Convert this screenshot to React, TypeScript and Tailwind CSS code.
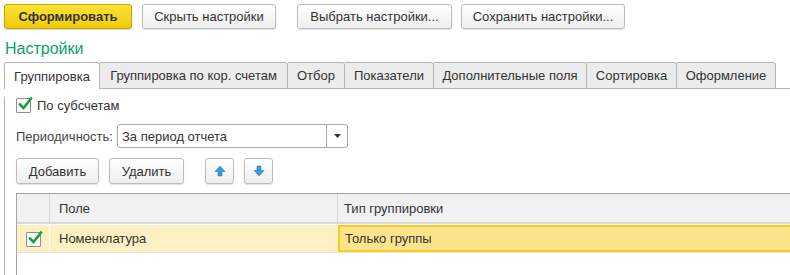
import React from "react";

const Btn = ({ children, className = "" }: { children: React.ReactNode; className?: string }) => (
  <div
    className={
      "h-[25px] flex items-center justify-center rounded-[3px] border border-[#bcbcbc] bg-gradient-to-b from-[#ffffff] to-[#eeeeee] shadow-[0_1px_1px_rgba(0,0,0,0.12)] text-[#333] " +
      className
    }
  >
    {children}
  </div>
);

const Check = ({ className = "" }: { className?: string }) => (
  <div className={"relative w-[15px] h-[15px] border border-[#8f8f8f] bg-white rounded-[1px] " + className}>
    <svg className="absolute left-[1px] top-[-3px]" width="15" height="15" viewBox="0 0 15 15">
      <path d="M2 8.5 L5.5 12 L13 2.5" fill="none" stroke="#16a03c" strokeWidth="2.6" strokeLinecap="square" />
    </svg>
  </div>
);

const Arrow = ({ up }: { up?: boolean }) => (
  <svg width="12" height="12" viewBox="0 0 12 12" style={{ transform: up ? "none" : "rotate(180deg)" }}>
    <path d="M6 1 L11 6.5 L8 6.5 L8 11 L4 11 L4 6.5 L1 6.5 Z" fill="#3a9be3" stroke="#2a7fc7" strokeWidth="0.6" />
  </svg>
);

const tabs = [
  { t: "Группировка", w: 96 },
  { t: "Группировка по кор. счетам", w: 188 },
  { t: "Отбор", w: 57 },
  { t: "Показатели", w: 89 },
  { t: "Дополнительные поля", w: 153 },
  { t: "Сортировка", w: 90 },
  { t: "Оформление", w: 99 },
];

export default function App() {
  return (
    <div
      className="w-[790px] h-[275px] bg-white overflow-hidden text-[13px] text-[#333] leading-none"
      style={{ fontFamily: '"Liberation Sans", Arial, sans-serif' }}
    >
      <div className="flex pt-[4px] pl-[4px]">
        <div className="w-[128px] h-[25px] flex items-center justify-center rounded-[3px] border border-[#c2a300] bg-gradient-to-b from-[#fbe233] to-[#f0cb00] font-bold text-[#333] shadow-[0_1px_1px_rgba(0,0,0,0.15)]">
          Сформировать
        </div>
        <Btn className="w-[134px] ml-[10px]">Скрыть настройки</Btn>
        <Btn className="w-[155px] ml-[21px]">Выбрать настройки...</Btn>
        <Btn className="w-[164px] ml-[9px]">Сохранить настройки...</Btn>
      </div>

      <div className="pl-[5px] mt-[11px] h-[18px] text-[16px] text-[#0d9f6e] flex items-center">Настройки</div>

      <div className="flex ml-[4px] mt-[4px] h-[27px]">
        {tabs.map((tb, i) => (
          <div
            key={tb.t}
            style={{ width: tb.w }}
            className={
              i === 0
                ? "flex items-center justify-center bg-white border border-b-0 border-[#b5b5b5] rounded-t-[3px] text-[#333]"
                : "flex items-center justify-center bg-[#ececec] border border-l-0 border-[#b5b5b5] rounded-tr-[3px] text-[#333]"
            }
          >
            {tb.t}
          </div>
        ))}
        <div className="flex-1 border-b border-[#b5b5b5]" />
      </div>

      <div className="ml-[4px] border-l border-[#b5b5b5] h-[200px] pl-[11px]">
        <div className="flex items-center mt-[8px] h-[16px]">
          <Check />
          <span className="ml-[6px]">По субсчетам</span>
        </div>

        <div className="flex items-center mt-[11px] h-[24px]">
          <span className="text-[#444] w-[101px]">Периодичность:</span>
          <div className="w-[231px] h-[24px] flex border border-[#a8a8a8] rounded-[3px] bg-white">
            <div className="flex-1 flex items-center pl-[4px] border-r border-[#a8a8a8]">За период отчета</div>
            <div className="w-[20px] flex items-center justify-center">
              <svg width="7" height="4" viewBox="0 0 7 4">
                <path d="M0 0 L7 0 L3.5 4 Z" fill="#333" />
              </svg>
            </div>
          </div>
        </div>

        <div className="flex items-center mt-[10px]">
          <Btn className="w-[83px] h-[26px]">Добавить</Btn>
          <Btn className="w-[75px] h-[26px] ml-[10px]">Удалить</Btn>
          <Btn className="w-[29px] h-[26px] ml-[21px]">
            <Arrow up />
          </Btn>
          <Btn className="w-[29px] h-[26px] ml-[10px]">
            <Arrow />
          </Btn>
        </div>

        <div className="mt-[9px] border-l border-t border-[#a3a3a3] h-[100px]">
          <div className="flex h-[30px] bg-[#f1f1f1] border-b-2 border-[#d9d9d9]">
            <div className="w-[33px] border-r border-[#dcdcdc]" />
            <div className="w-[288px] flex items-center pl-[9px] border-r border-[#dcdcdc]">Поле</div>
            <div className="flex-1 flex items-center pl-[6px]">Тип группировки</div>
          </div>
          <div className="flex h-[28px] bg-[#fdf1c4] border-b border-[#e2e2e2] mt-[1px]">
            <div className="w-[33px] flex items-center justify-center border-r border-[#fbfbf0]">
              <Check className="mt-[1px]" />
            </div>
            <div className="w-[288px] flex items-center pl-[9px]">Номенклатура</div>
            <div className="flex-1 flex items-center pl-[5px] bg-[#fde38c] border-2 border-r-0 border-[#f8cb1c]">Только группы</div>
          </div>
        </div>
      </div>
    </div>
  );
}
